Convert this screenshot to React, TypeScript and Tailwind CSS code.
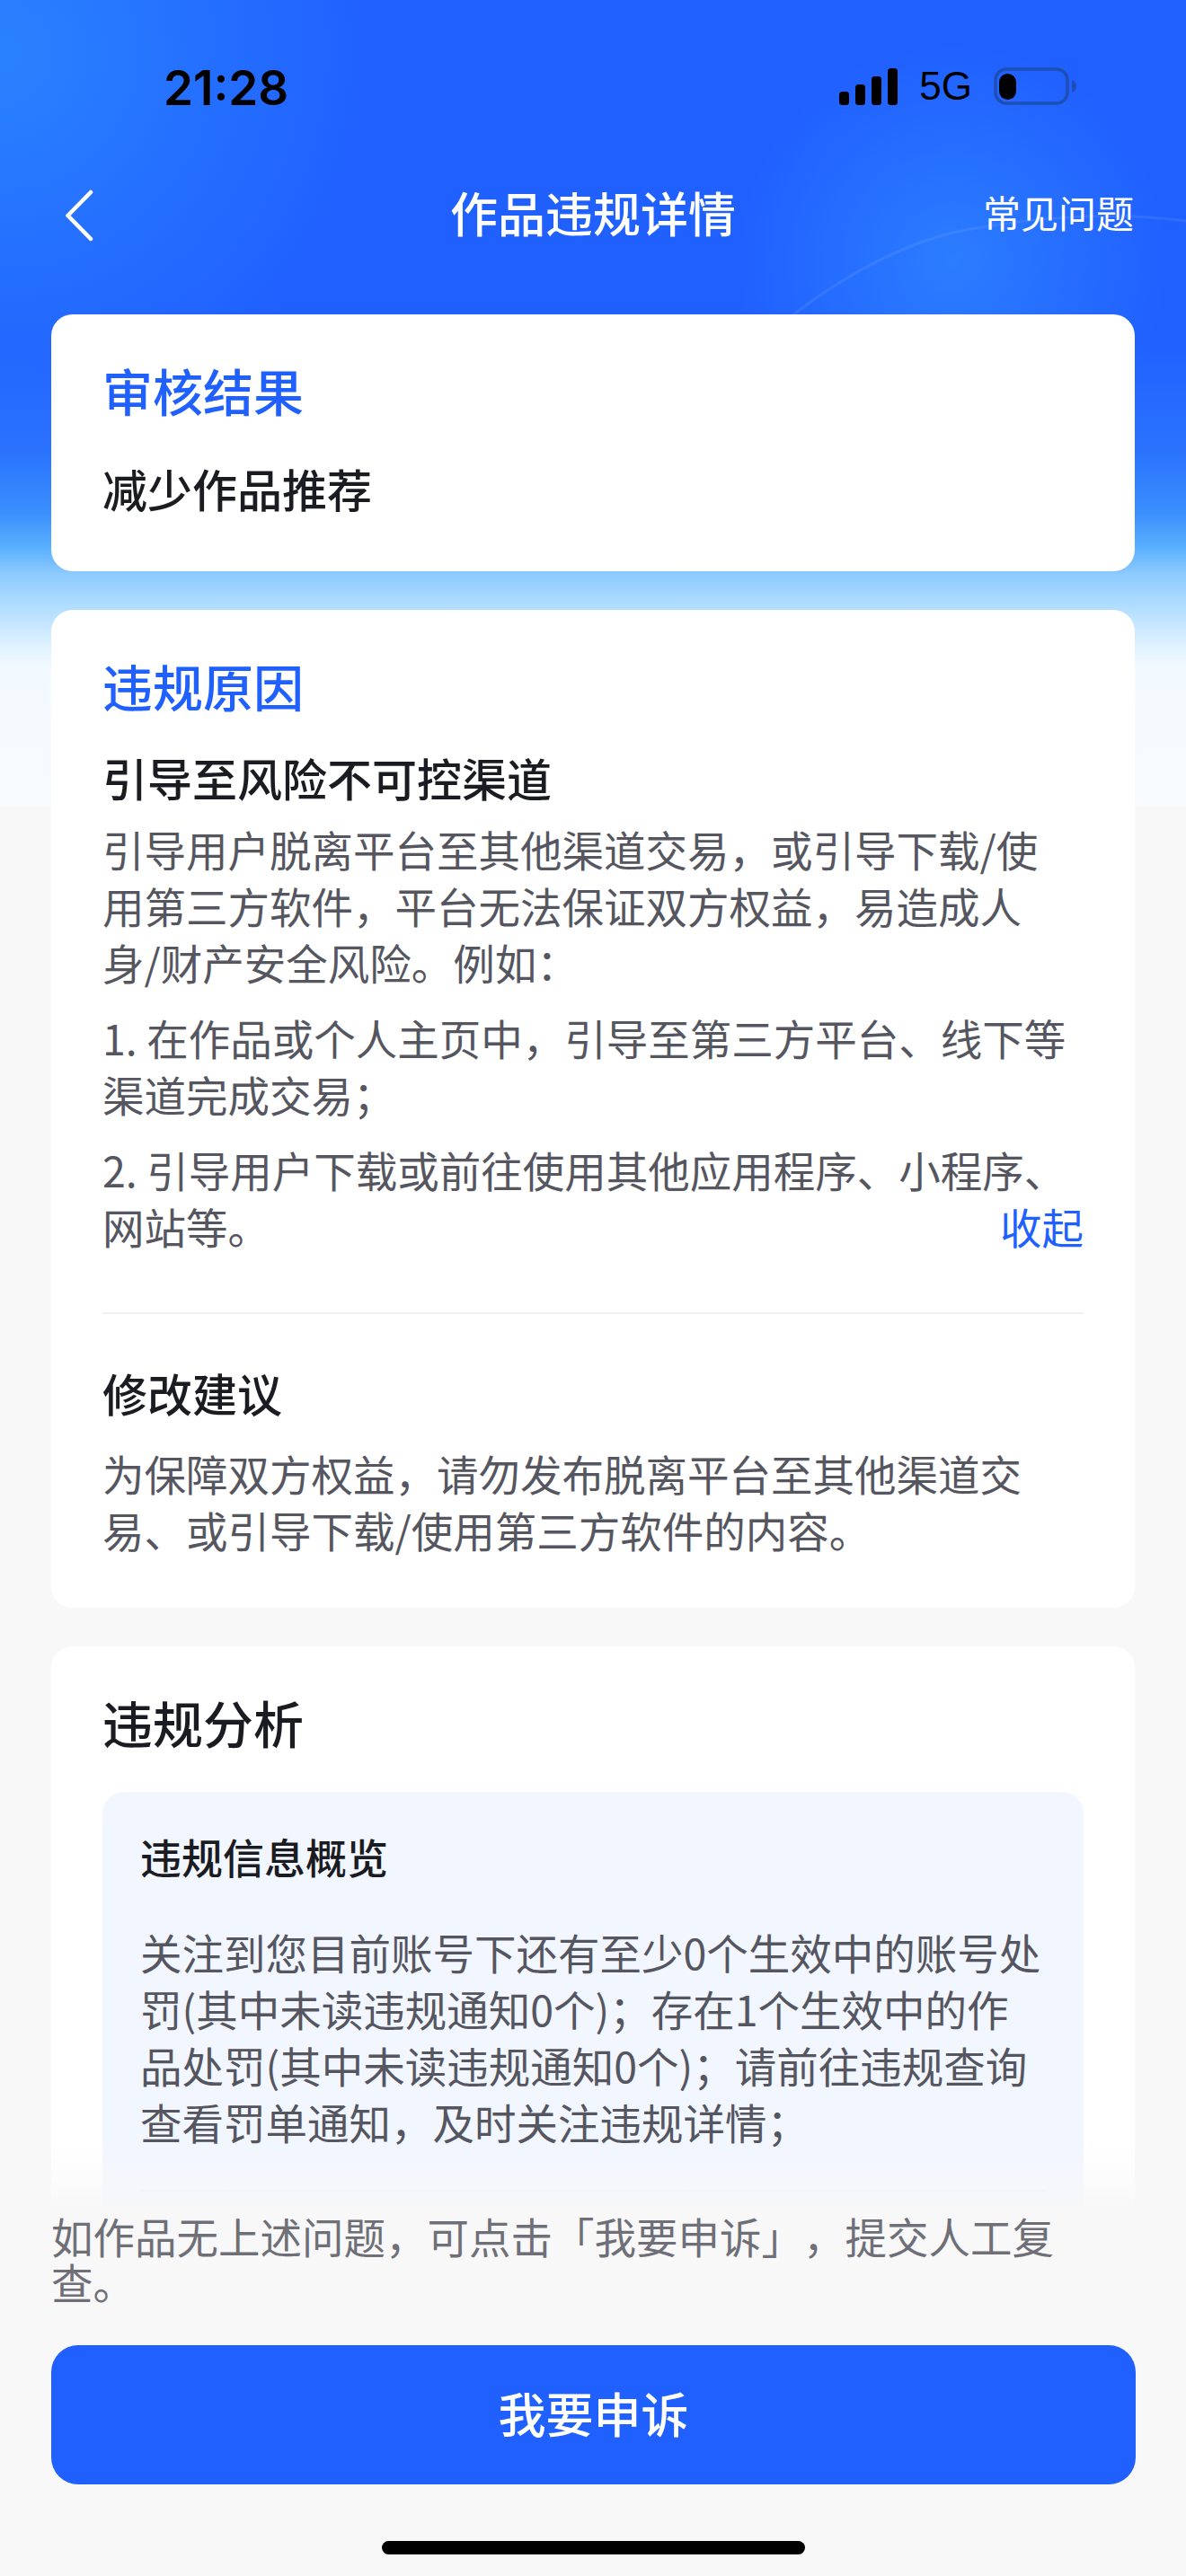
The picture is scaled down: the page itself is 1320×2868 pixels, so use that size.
const CJK = "font-['Noto_Sans_CJK_SC','Noto_Sans',sans-serif]";

function Signal() {
  return (
    <svg width="65" height="41" viewBox="0 0 65 41" fill="#000">
      <rect x="0" y="26" width="11" height="15" rx="3.5" />
      <rect x="18" y="18" width="11" height="23" rx="3.5" />
      <rect x="36" y="9" width="11" height="32" rx="3.5" />
      <rect x="54" y="0" width="11" height="41" rx="3.5" />
    </svg>
  );
}

function Battery() {
  return (
    <svg width="92" height="42" viewBox="0 0 92 42" fill="none">
      <rect x="2" y="2" width="80" height="38" rx="12" stroke="#1e4fb4" strokeWidth="3.500" />
      <rect x="6" y="7" width="19" height="29" rx="9.500" fill="#000" />
      <path d="M87 14c3 1 5 3.500 5 7s-2 6-5 7z" fill="#1e4fb4" />
    </svg>
  );
}

function StatusBar() {
  return (
    <div className="flex h-[196px] items-start justify-between pl-[182px] pr-[122px] pt-[68px]">
      <span className="font-['Inter',sans-serif] text-[53px] leading-[60px] font-semibold text-black">21:28</span>
      <div className="flex items-center gap-[24px] pt-[7px]">
        <Signal />
        <span className="font-['Liberation_Sans',sans-serif] text-[44px] leading-[42px] text-black">5G</span>
        <Battery />
      </div>
    </div>
  );
}

function NavBar() {
  return (
    <div className="relative flex h-[154px] items-start justify-between pl-[72px] pr-[58px]">
      <svg width="36" height="60" viewBox="0 0 36 60" fill="none" className="mt-[14px]">
        <path d="M29 4 3.500 30 29 56" stroke="#fff" strokeWidth="4.500" strokeLinecap="round" strokeLinejoin="round" />
      </svg>
      <span className={`absolute left-0 right-0 top-[8px] text-center ${CJK} text-[53px] leading-[64px] font-medium text-white`}>作品违规详情</span>
      <span className={`${CJK} mt-[12px] text-[42px] leading-[56px] text-white`}>常见问题</span>
    </div>
  );
}

function Section({ title, children }: { title: string; children: React.ReactNode }) {
  return (
    <section className="rounded-[24px] bg-white px-[57px] pt-[46px]">
      <h2 className={`${CJK} text-[56px] leading-[76px] font-medium text-[#2060ff]`}>{title}</h2>
      {children}
    </section>
  );
}

function Body({ children }: { children: React.ReactNode }) {
  return <p className={`${CJK} text-[46.5px] leading-[63px] text-[#55565f]`}>{children}</p>;
}

export default function App() {
  return (
    <div className={`relative h-[2868px] w-[1320px] overflow-hidden bg-[#f8f8f8] [text-spacing-trim:space-all] ${CJK}`}>
      <div className="absolute inset-x-0 top-0 h-[897px] bg-[radial-gradient(circle_at_1060px_290px,#2c7dff_0,#2c7dff00_240px),radial-gradient(circle_at_0_60px,#2a82ff_0,#2a82ff00_420px),linear-gradient(180deg,#2060ff_0px,#2060ff_380px,#2a72fe_500px,#3a8efc_570px,#5ab0ff_610px,#8fcbff_640px,#b5dfff_680px,#e0f2ff_720px,#f3faff_745px,#f7fbff_897px)]" />
      <svg width="620" height="300" viewBox="0 0 620 300" fill="none" className="absolute right-0 top-[100px]">
        <path d="M134 296C200 225 300 170 375 156S540 135 620 146" stroke="#ffffff" strokeOpacity="0.08" strokeWidth="3" />
      </svg>

      <div className="relative">
        <StatusBar />
        <NavBar />

        <div className="flex flex-col gap-[43px] px-[57px]">
          <Section title="审核结果">
            <p className={`${CJK} mt-[34px] pb-[56px] text-[50px] leading-[74px] font-medium text-[#1b1c22]`}>减少作品推荐</p>
          </Section>

          <Section title="违规原因">
            <h3 className={`${CJK} mt-[30px] text-[50px] leading-[68px] font-medium text-[#1b1c22]`}>引导至风险不可控渠道</h3>
            <div className="mt-[14px] flex flex-col gap-[21px]">
              <Body>
                引导用户脱离平台至其他渠道交易，或引导下载/使
                <br />
                用第三方软件，平台无法保证双方权益，易造成人
                <br />
                身/财产安全风险。例如：
              </Body>
              <Body>
                1. 在作品或个人主页中，引导至第三方平台、线下等
                <br />
                渠道完成交易；
              </Body>
              <div>
                <Body>2. 引导用户下载或前往使用其他应用程序、小程序、</Body>
                <div className="flex justify-between">
                  <Body>网站等。</Body>
                  <span className={`${CJK} text-[46.5px] leading-[63px] text-[#2060ff]`}>收起</span>
                </div>
              </div>
            </div>
            <div className="mt-[65px] h-[2px] bg-[#f0f0f2]" />
            <h3 className={`${CJK} mt-[53px] text-[50px] leading-[68px] font-medium text-[#1b1c22]`}>修改建议</h3>
            <div className="mt-[24px] pb-[56px]">
              <Body>
                为保障双方权益，请勿发布脱离平台至其他渠道交
                <br />
                易、或引导下载/使用第三方软件的内容。
              </Body>
            </div>
          </Section>

          <section className="rounded-[24px] bg-white px-[57px] pb-[60px] pt-[46px]">
            <h2 className={`${CJK} text-[56px] leading-[76px] font-medium text-[#1b1c22]`}>违规分析</h2>
            <div className="mt-[40px] rounded-[24px] bg-[#f2f6ff] px-[42px] pb-[60px] pt-[39px]">
              <h4 className={`${CJK} text-[46px] leading-[64px] font-medium text-[#1b1c22]`}>违规信息概览</h4>
              <div className="mt-[43px]">
                <Body>
                  关注到您目前账号下还有至少0个生效中的账号处
                  <br />
                  罚(其中未读违规通知0个)；存在1个生效中的作
                  <br />
                  品处罚(其中未读违规通知0个)；请前往违规查询
                  <br />
                  查看罚单通知，及时关注违规详情；
                </Body>
              </div>
              <div className="mt-[45px] h-[2px] bg-[#eeeef0]" />
            </div>
          </section>
        </div>
      </div>

      <div className="absolute inset-x-0 bottom-0 flex h-[405px] flex-col bg-[#f8f8f8] px-[57px]">
        <div className="absolute inset-x-0 bottom-full h-[70px] bg-gradient-to-b from-[#f8f8f800] to-[#f8f8f8]" />
        <p className={`${CJK} text-[46.5px] leading-[51px] text-[#6f6f78]`}>如作品无上述问题，可点击「我要申诉」，提交人工复查。</p>
        <button type="button" className={`mt-[46px] h-[155px] w-[1207px] shrink-0 rounded-[30px] bg-[#2060ff] pb-[3px] ${CJK} text-[53px] font-medium text-white`}>我要申诉</button>
        <div className="mx-auto mt-[63px] h-[15px] w-[471px] rounded-full bg-black" />
      </div>
    </div>
  );
}
